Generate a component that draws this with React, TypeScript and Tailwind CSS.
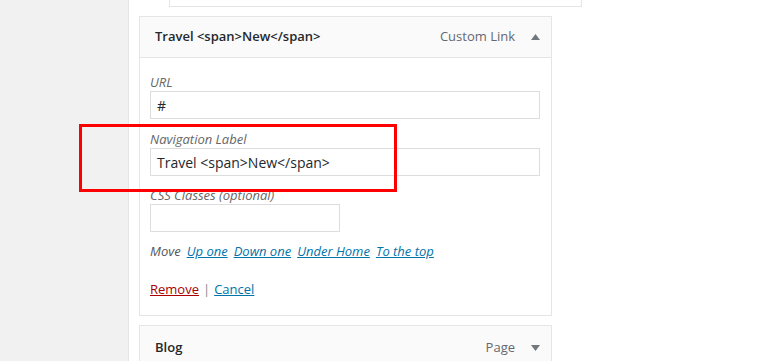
import React from "react";

const Up = () => (
  <svg width="9" height="6" viewBox="0 0 9 6" className="block">
    <path d="M4.5 0 L9 6 L0 6 Z" fill="#72777c" />
  </svg>
);
const Down = () => (
  <svg width="9" height="6" viewBox="0 0 9 6" className="block">
    <path d="M0 0 L9 0 L4.5 6 Z" fill="#72777c" />
  </svg>
);

export default function App() {
  return (
    <div
      className="relative w-[784px] h-[361px] overflow-hidden flex items-start bg-white text-[#23282d]"
      style={{ fontFamily: '"Open Sans", "Noto Sans", sans-serif' }}
    >
      <div className="w-[129px] h-[361px] shrink-0 bg-[#f1f1f1] border-r border-[#e5e5e5]" />
      <div className="flex flex-col pl-[10px] shrink-0">
        <div className="shrink-0 ml-[30px] w-[413px] h-[7px] border-x border-b border-[#e5e5e5] bg-white" />
        <div className="shrink-0 mt-[9px] w-[413px] border border-[#e5e5e5]">
          <div className="h-[41px] bg-[#fafafa] border-b border-[#e5e5e5] flex items-center pl-[15px] pr-[11px]">
            <span className="text-[13px] font-semibold">Travel &lt;span&gt;New&lt;/span&gt;</span>
            <span className="ml-auto text-[13px] text-[#646970]">Custom Link</span>
            <span className="ml-[16px]"><Up /></span>
          </div>
          <div className="px-[10px] pt-[15px] pb-[17px] flex flex-col">
            <div className="text-[13px] italic text-[#666] leading-[18px]">URL</div>
            <div className="h-[28px] w-[390px] border border-[#ddd] flex items-center px-[6px] text-[14px]">#</div>
            <div className="mt-[11px] text-[13px] italic text-[#666] leading-[18px]">Navigation Label</div>
            <div className="h-[28px] w-[390px] border border-[#ddd] flex items-center px-[6px] text-[14px]">Travel &lt;span&gt;New&lt;/span&gt;</div>
            <div className="mt-[10px] text-[13px] italic text-[#666] leading-[18px]">CSS Classes (optional)</div>
            <div className="h-[28px] w-[190px] border border-[#ddd]" />
            <div className="mt-[10px] text-[13px] italic leading-[18px] flex gap-[6px] text-[#555]">
              <span>Move</span>
              <span className="text-[#0073aa] underline">Up one</span>
              <span className="text-[#0073aa] underline">Down one</span>
              <span className="text-[#0073aa] underline">Under Home</span>
              <span className="text-[#0073aa] underline">To the top</span>
            </div>
            <div className="mt-[20px] text-[13px] leading-[18px] flex gap-[4px]">
              <span className="text-[#a00] underline">Remove</span>
              <span className="text-[#82878c]">|</span>
              <span className="text-[#0073aa] underline">Cancel</span>
            </div>
          </div>
        </div>
        <div className="shrink-0 mt-[9px] w-[413px] border border-[#e5e5e5]">
          <div className="h-[43px] bg-[#fafafa] flex items-center pl-[15px] pr-[11px]">
            <span className="text-[13px] font-semibold">Blog</span>
            <span className="ml-auto text-[13px] text-[#646970]">Page</span>
            <span className="ml-[16px]"><Down /></span>
          </div>
        </div>
      </div>
      <div className="absolute left-[79px] top-[124px] w-[318px] h-[68px] border-[3px] border-[#ff0000]" />
    </div>
  );
}
